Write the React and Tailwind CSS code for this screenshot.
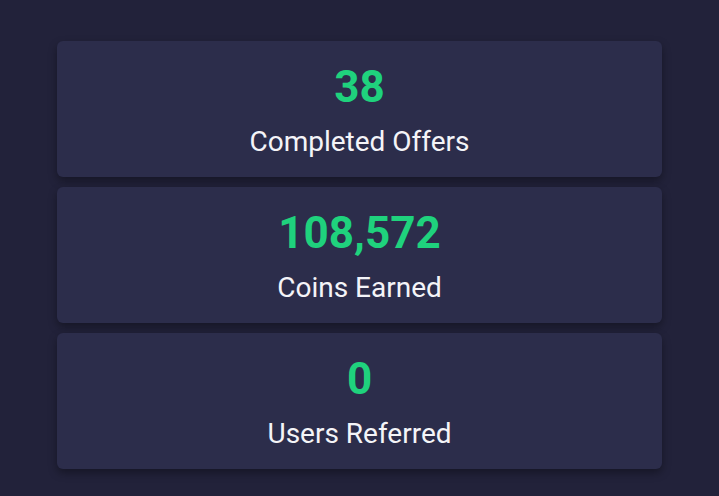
import React from 'react';

const stats = [
  { value: '38', label: 'Completed Offers' },
  { value: '108,572', label: 'Coins Earned' },
  { value: '0', label: 'Users Referred' },
];

const App = () => {
  return (
    <div className="min-h-screen bg-[#22223a] pt-[41px] pb-8 px-[57px]" style={{ fontFamily: 'Roboto, "Noto Sans", sans-serif' }}>
      <div className="flex flex-col gap-[10px]">
        {stats.map(s => (
          <div
            key={s.label}
            className="h-[136px] pt-[2px] rounded-md bg-[#2c2d4b] shadow-[0_4px_8px_rgba(0,0,0,0.35)] flex flex-col items-center justify-center"
          >
            <div className="text-[44px] leading-none font-bold text-[#1fd27d] mb-[19px]">{s.value}</div>
            <div className="text-[28px] leading-none text-[#f4f4f8]">{s.label}</div>
          </div>
        ))}
      </div>
    </div>
  );
};

export default App;
